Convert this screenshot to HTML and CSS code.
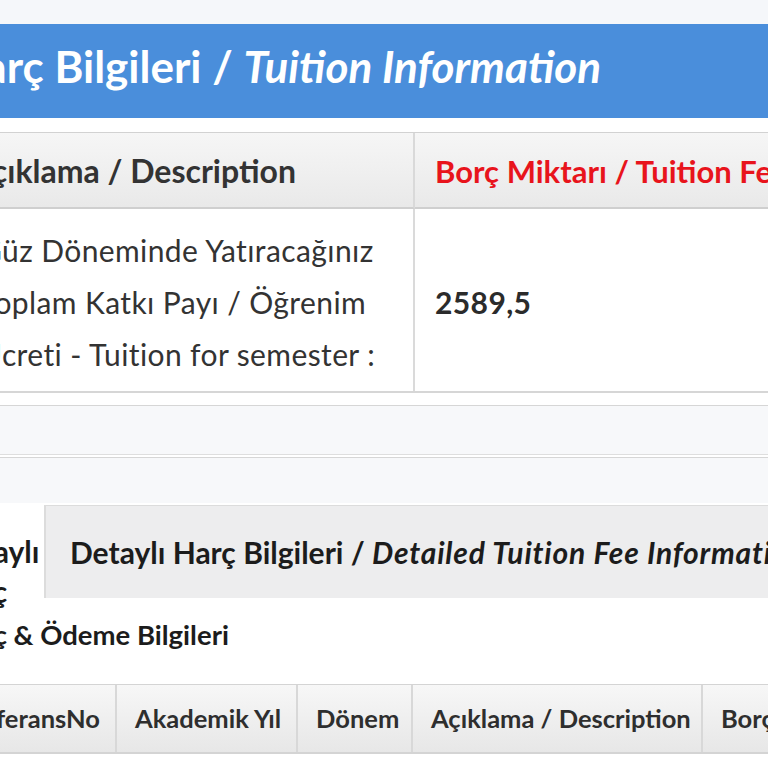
FILE: index.html
```html
<!DOCTYPE html>
<html lang="tr">
<head>
<meta charset="utf-8">
<title>Harç Bilgileri</title>
<link rel="stylesheet" href="styles.css">
</head>
<body>
<div class="page">
  <div class="top-gap"></div>
  <div class="title-bar">
    <span class="title-text">Harç Bilgileri / <em>Tuition Information</em></span>
  </div>
  <div class="panel">
    <div class="fee-table">
      <div class="fee-head fee-desc">Açıklama / Description</div>
      <div class="fee-head fee-amount">Borç Miktarı / Tuition Fee</div>
      <div class="fee-cell fee-desc">Güz Döneminde Yatıracağınız<br>Toplam Katkı Payı / Öğrenim<br>Ücreti - Tuition for semester :</div>
      <div class="fee-cell fee-value">2589,5</div>
    </div>
    <div class="band band-one"></div>
    <div class="band band-two"></div>
  </div>
  <div class="tabs">
    <div class="tab-side">Detaylı Harç</div>
    <div class="tab-main">Detaylı Harç Bilgileri / <em>Detailed Tuition Fee Information</em></div>
  </div>
  <h2 class="section-title">Harç &amp; Ödeme Bilgileri</h2>
  <div class="detail-table">
    <div class="dt-head">ReferansNo</div>
    <div class="dt-head">Akademik Yıl</div>
    <div class="dt-head">Dönem</div>
    <div class="dt-head">Açıklama / Description</div>
    <div class="dt-head">Borç Miktarı</div>
  </div>
</div>
</body>
</html>
```
FILE: styles.css
```css
html, body {
  margin: 0;
  padding: 0;
}
body {
  background: #ffffff;
  font-family: Lato, "Open Sans", sans-serif;
  color: #333;
  overflow: hidden;
  width: 768px;
  height: 768px;
}
.page {
  margin-left: -60px;
  width: 1200px;
}
.top-gap {
  height: 24px;
  background: #f5f7fa;
}
.title-bar {
  background: #4a8edb;
  height: 84px;
  padding-bottom: 10px;
  line-height: 84px;
  padding-left: 11px;
  color: #fff;
  font-size: 44px;
  font-weight: 700;
  white-space: nowrap;
}
.title-bar em {
  font-style: italic;
}
.panel {
  padding-top: 14px;
  background: #fff;
}
.fee-table {
  margin-left: 20px;
  display: grid;
  grid-template-columns: 455px 700px;
  border-top: 1px solid #d2d2d2;
  border-bottom: 2px solid #d6d6d6;
}
.fee-head {
  height: 72px;
  padding-top: 2px;
  line-height: 72px;
  padding-left: 20px;
  font-size: 31px;
  font-weight: 700;
  white-space: nowrap;
  background: linear-gradient(#f6f6f6, #e9e9e9);
  border-bottom: 2px solid #cfcfcf;
}
.fee-head.fee-desc {
  color: #333;
  padding-left: 10px;
  width: 443px;
  font-size: 32px;
  border-right: 2px solid #d9d9d9;
}
.fee-head.fee-amount {
  color: #e8141c;
}
.fee-cell {
  padding: 15px 0 11px 20px;
  font-size: 30px;
  letter-spacing: 0.4px;
  line-height: 52px;
  white-space: nowrap;
  background: #fff;
}
.fee-cell.fee-desc {
  border-right: 2px solid #dadada;
}
.fee-value {
  display: flex;
  align-items: center;
  font-weight: 700;
  color: #2b2b2b;
}
.band {
  background: #f7f8fa;
}
.band-one {
  margin-top: 12px;
  height: 48px;
  border-top: 1px solid #d6d6d6;
  border-bottom: 1px solid #dedede;
}
.band-two {
  margin-top: 2px;
  height: 45px;
  border-top: 1px solid #d6d6d6;
}
.tabs {
  display: flex;
  height: 95px;
  background: #fff;
}
.tab-side {
  width: 100px;
  padding-left: 4px;
  padding-top: 28px;
  font-size: 30px;
  line-height: 40px;
  font-weight: 700;
  color: #1c1c1c;
  background: #fff;
}
.tab-main {
  flex: 1;
  margin-top: 2px;
  background: #ededee;
  border-top: 1px solid #dcdcdc;
  border-left: 2px solid #dcdcdc;
  padding-left: 24px;
  padding-top: 26px;
  line-height: 40px;
  font-size: 30px;
  font-weight: 700;
  color: #1c1c1c;
  white-space: nowrap;
  position: relative;
  z-index: 1;
}
.tab-main em {
  font-style: italic;
  letter-spacing: 0.8px;
}
.section-title {
  margin: 17px 0 0 0;
  padding-left: 9px;
  font-size: 27.5px;
  line-height: 40px;
  font-weight: 700;
  color: #1c1c1c;
}
.detail-table {
  margin-top: 29px;
  margin-left: 9px;
  display: grid;
  grid-template-columns: 168px 181px 115px 290px 300px;
  border-top: 1px solid #d4d4d4;
  border-bottom: 2px solid #d4d4d4;
}
.dt-head {
  height: 67px;
  line-height: 67px;
  padding-left: 18px;
  font-size: 25.5px;
  font-weight: 700;
  color: #2e2e2e;
  white-space: nowrap;
  background: linear-gradient(#f7f7f7, #e7e7e7);
  border-right: 2px solid #d8d8d8;
}
```
